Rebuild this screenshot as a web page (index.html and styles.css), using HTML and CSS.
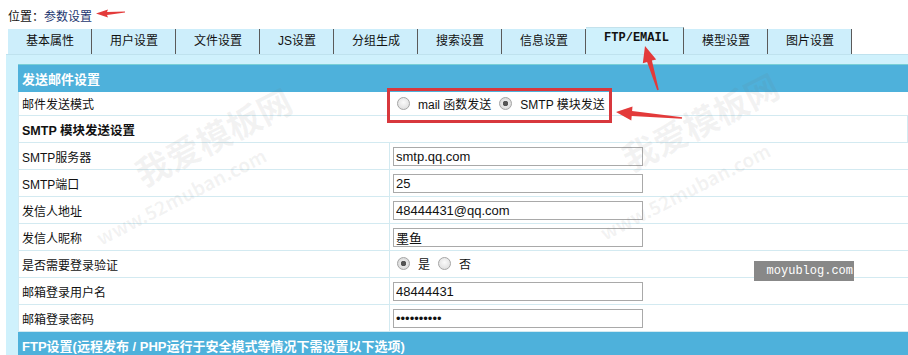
FILE: index.html
```html
<!doctype html>
<html>
<head>
<meta charset="utf-8">
<title>参数设置</title>
<link rel="stylesheet" href="styles.css">
</head>
<body>
<div class="crumb">位置：<a href="#">参数设置</a></div>
<div class="tabs">
  <div class="tab">基本属性</div>
  <div class="tab">用户设置</div>
  <div class="tab">文件设置</div>
  <div class="tab">JS设置</div>
  <div class="tab">分组生成</div>
  <div class="tab">搜索设置</div>
  <div class="tab">信息设置</div>
  <div class="tab active">FTP/EMAIL</div>
  <div class="tab">模型设置</div>
  <div class="tab">图片设置</div>
</div>
<div class="panel">
  <table class="form">
    <tr class="head"><td colspan="2">发送邮件设置</td></tr>
    <tr class="short">
      <td class="label">邮件发送模式</td>
      <td><label class="opt"><input type="radio" name="mode">mail 函数发送</label><label class="opt"><input type="radio" name="mode" checked>SMTP 模块发送</label></td>
    </tr>
    <tr><td class="label sub" colspan="2">SMTP 模块发送设置</td></tr>
    <tr><td class="label">SMTP服务器</td><td><input class="field" type="text" value="smtp.qq.com"></td></tr>
    <tr><td class="label">SMTP端口</td><td><input class="field" type="text" value="25"></td></tr>
    <tr><td class="label">发信人地址</td><td><input class="field" type="text" value="48444431@qq.com"></td></tr>
    <tr><td class="label">发信人昵称</td><td><input class="field" type="text" value="墨鱼"></td></tr>
    <tr>
      <td class="label">是否需要登录验证</td>
      <td><label class="opt"><input type="radio" name="auth" checked>是</label><label class="opt"><input type="radio" name="auth">否</label></td>
    </tr>
    <tr><td class="label">邮箱登录用户名</td><td><input class="field" type="text" value="48444431"></td></tr>
    <tr><td class="label">邮箱登录密码</td><td><input class="field" type="password" value="1234567890"></td></tr>
    <tr class="head"><td colspan="2">FTP设置(远程发布 / PHP运行于安全模式等情况下需设置以下选项)</td></tr>
  </table>
</div>

<svg class="marks" width="908" height="355" viewBox="0 0 908 355">
  <g class="wm">
    <text x="215" y="150" font-size="34" transform="rotate(-27 215 140)" text-anchor="middle">我爱模板网</text>
    <text x="182" y="204" font-size="19" transform="rotate(-27 182 198)" text-anchor="middle">www.52muban.com</text>
    <text x="702" y="135" font-size="34" transform="rotate(-27 702 125)" text-anchor="middle">我爱模板网</text>
    <text x="686" y="199" font-size="19" transform="rotate(-27 686 193)" text-anchor="middle">www.52muban.com</text>
  </g>
  <rect x="388.5" y="89.5" width="222" height="32" fill="none" stroke="#d8383d" stroke-width="3"/>
  <g fill="#e33a3a">
    <polygon points="96,13.5 108,9.5 107,12 125,11.5 125,12.5 107,15 108,17.5"/>
    <polygon points="645,46 656.2,59.4 651.9,60.6 658.8,89.8 657.2,90.2 647.1,62 642.8,63.3"/>
    <polygon points="616,112 632.5,106.4 632.1,110.9 682.1,117.2 681.9,118.8 631.7,115.9 631.3,120.4"/>
  </g>
</svg>
<div class="stamp">moyublog.com</div>
</body>
</html>
```

FILE: styles.css
```css
body {
	margin: 0;
	overflow: hidden;
	background: #fff;
	color: #111;
	font-family: "Liberation Sans", "Noto Sans CJK SC", sans-serif;
	font-size: 12px;
}
.crumb {
	height: 27px;
	padding-left: 8px;
	line-height: 34px;
}
.crumb a {
	color: #1c3670;
	text-decoration: none;
}
.tabs {
	display: flex;
	align-items: flex-end;
	height: 27px;
	padding-left: 8px;
}
.tab {
	height: 25px;
	padding: 0 17px 0 18px;
	line-height: 24px;
	background: #cdeefb;
	border-right: 1px solid #5a5a5a;
	box-sizing: border-box;
	white-space: nowrap;
	font-size: 12px;
}
.tab.active {
	height: 27px;
	padding: 0 14px 0 18px;
	line-height: 20px;
	background: #cff1fc;
	border-top: 1px solid #c4e2ec;
	font-family: "Liberation Mono", monospace;
	font-weight: bold;
}
.panel {
	margin-left: 6px;
	padding: 9px 0 0 12px;
	background: #cff1fc;
	border-top: 1px solid #bfe2ee;
	height: 300px;
}
.form {
	width: 890px;
	border-collapse: collapse;
}
.form td {
	height: 26px;
	padding: 0 3px;
	border: 1px solid #d3eaf1;
	border-right: 0;
	background: #fff;
	vertical-align: middle;
}
.form .short td {
	height: 23px;
}
.form .label {
	width: 364px;
	padding-left: 3px;
	border-right: 1px solid #d3eaf1;
}
.form .sub {
	font-weight: bold;
	font-size: 12.5px;
}
.form .head td {
	height: 26px;
	background: #4eb1db;
	border-color: #4eb1db;
	border-top: 1px solid #79cfd6;
	color: #fff;
	font-weight: bold;
	font-size: 13px;
	padding-left: 3px;
}
.field {
	width: 250px;
	height: 19px;
	box-sizing: border-box;
	margin: 0;
	padding: 0 2px;
	border: 1px solid #a9a9a9;
	font-family: "Liberation Sans", "Noto Sans CJK SC", sans-serif;
	font-size: 13px;
	color: #111;
	display: block;
}
.opt {
	display: inline-flex;
	align-items: center;
	margin-left: 4px;
	margin-right: 4px;
	font-size: 12px;
}
.opt input {
	-webkit-appearance: none;
	appearance: none;
	width: 13px;
	height: 13px;
	margin: 0 8px 0 0;
	border: 1px solid #a6a6a6;
	border-radius: 50%;
	background: radial-gradient(circle at 50% 40%, #fafafa, #d8d8d8);
}
.opt input:checked {
	background: radial-gradient(circle, #555 0 2.5px, #e8e8e8 3px, #cfcfcf);
}
.marks {
	position: absolute;
	left: 0;
	top: 0;
	pointer-events: none;
}
.marks .wm text {
	fill: rgba(120, 120, 120, 0.09);
	font-family: "Noto Sans CJK SC", sans-serif;
	font-weight: bold;
}
.stamp {
	position: absolute;
	left: 754px;
	top: 261px;
	width: 100px;
	height: 20px;
	box-sizing: border-box;
	padding-right: 1px;
	background: #888;
	color: #fff;
	font-family: "Liberation Mono", monospace;
	font-size: 12px;
	line-height: 20px;
	text-align: right;
}
```
